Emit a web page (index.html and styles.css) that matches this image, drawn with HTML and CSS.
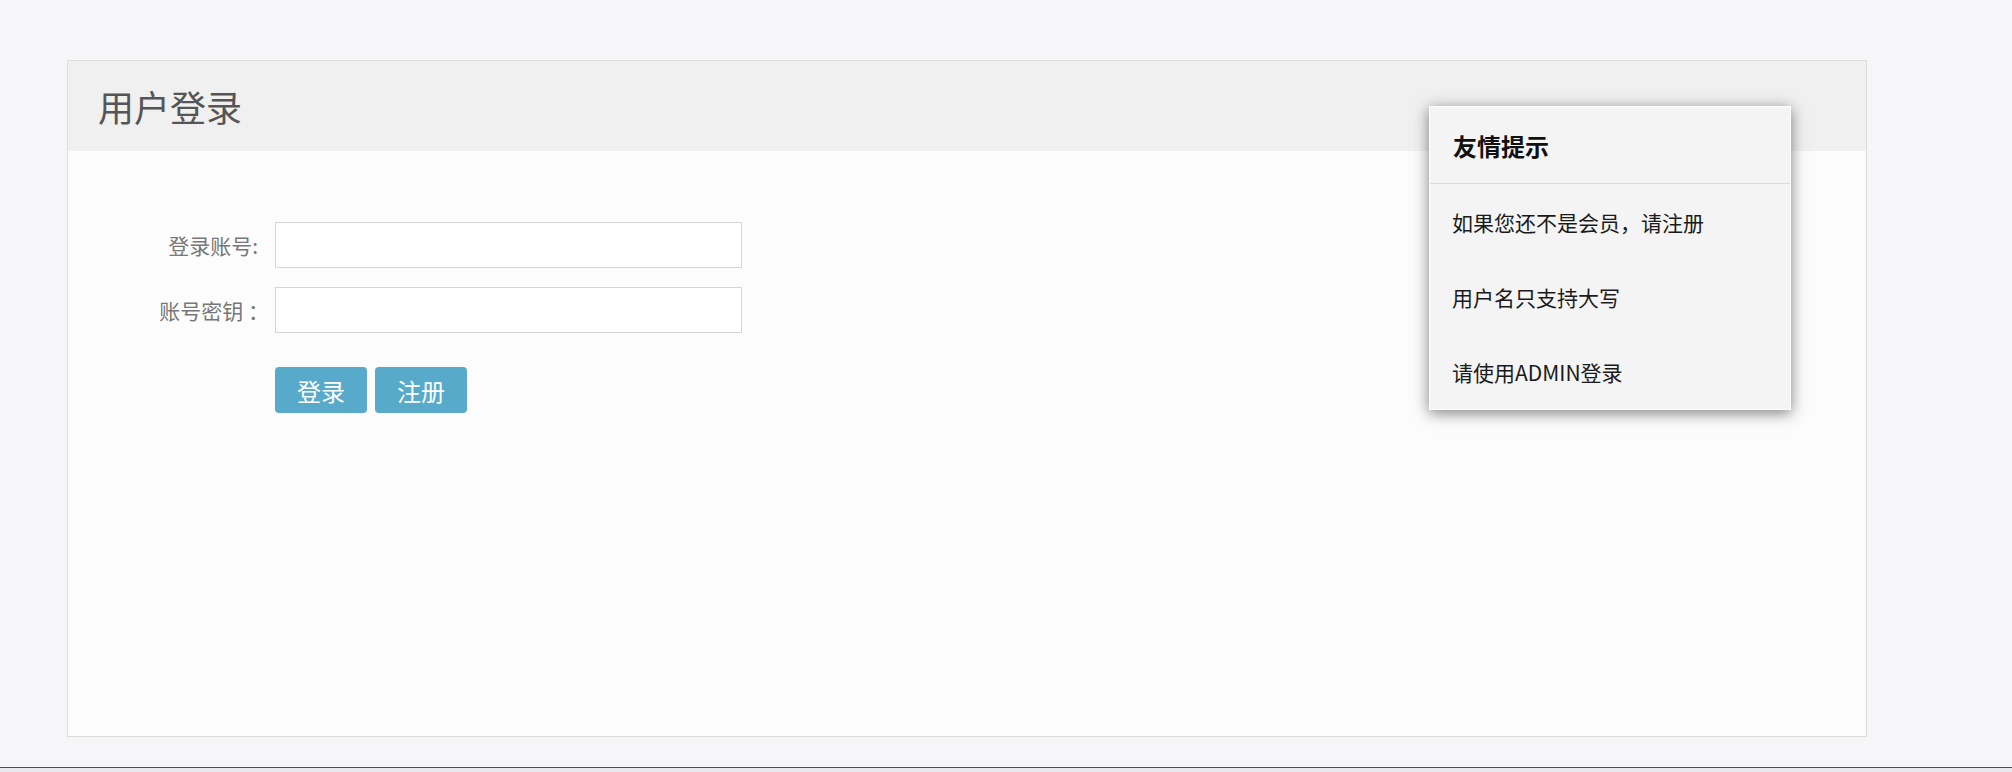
FILE: index.html
```html
<!DOCTYPE html>
<html lang="zh-CN">
<head>
    <meta charset="UTF-8">
    <meta name="viewport" content="width=device-width, initial-scale=1.0">
    <link rel="stylesheet" href="styles.css">
    <title>用户登录</title>
</head>
<body>
    <div class="page">
        <div class="panel">
            <div class="panel-head">用户登录</div>
            <div class="panel-body">
                <form class="login-form" action="#" method="post">
                    <label class="form-label" for="u_name">登录账号:</label>
                    <input class="form-input" type="text" name="u_name" id="u_name">
                    <label class="form-label wide-colon" for="u_pass">账号密钥 ：</label>
                    <input class="form-input" type="password" name="u_pass" id="u_pass">
                    <div class="form-actions">
                        <button type="submit" class="btn">登录</button>
                        <button type="button" class="btn">注册</button>
                    </div>
                </form>
            </div>
            <div class="tips">
                <div class="tips-title">友情提示</div>
                <ul class="tips-list">
                    <li>如果您还不是会员，请注册</li>
                    <li>用户名只支持大写</li>
                    <li>请使用ADMIN登录</li>
                </ul>
            </div>
        </div>
    </div>
    <div class="footer"></div>
</body>
</html>
```

FILE: styles.css
```css
*
{
    box-sizing: border-box;
    font-family: "Noto Sans CJK SC", "Liberation Sans", sans-serif;
}
html, body{margin: 0;padding: 0;}
body{background: #f6f6f8;height: 772px;overflow: hidden;}
.page{padding: 60px 0 30px 67px;}
.panel{position: relative;width: 1800px;height: 677px;border: 1px solid #dcdcdc;background: #fcfcfc;}
.panel-head{height: 90px;display: flex;align-items: center;padding-left: 30px;background: #f0f0f0;color: #555;font-size: 36px;}
.panel-body{padding-top: 71px;}
.login-form{display: grid;grid-template-columns: 190px 467px;column-gap: 17px;row-gap: 19px;align-items: center;}
.form-label{text-align: right;color: #777;font-size: 21px;white-space: nowrap;}
.wide-colon{margin-right: -11px;}
.form-input{height: 46px;border: 1px solid #d6d6d6;background: #fff;font-size: 21px;padding: 0 10px;outline: none;}
.form-actions{grid-column: 2;display: flex;gap: 8px;margin-top: 15px;}
.btn{width: 92px;height: 46px;border: none;border-radius: 4px;background: #57aaca;color: #fff;font-size: 24px;cursor: pointer;padding: 0;}
.tips{position: absolute;top: 45px;right: 75px;width: 362px;background: #f4f4f4;border: 1px solid #fff;box-shadow: 0 3px 14px rgba(0,0,0,0.5);}
.tips-title{height: 77px;display: flex;align-items: center;padding-left: 23px;font-size: 24px;font-weight: bold;color: #111;border-bottom: 1px solid #dcdcdc;}
.tips-list{list-style: none;margin: 0;padding: 0;}
.tips-list li{height: 75px;display: flex;align-items: center;padding-left: 22px;font-size: 21px;color: #1a1a1a;}
.footer{border-top: 1px solid #4a4a4a;background: #e8e8ee;height: 5px;}
```
